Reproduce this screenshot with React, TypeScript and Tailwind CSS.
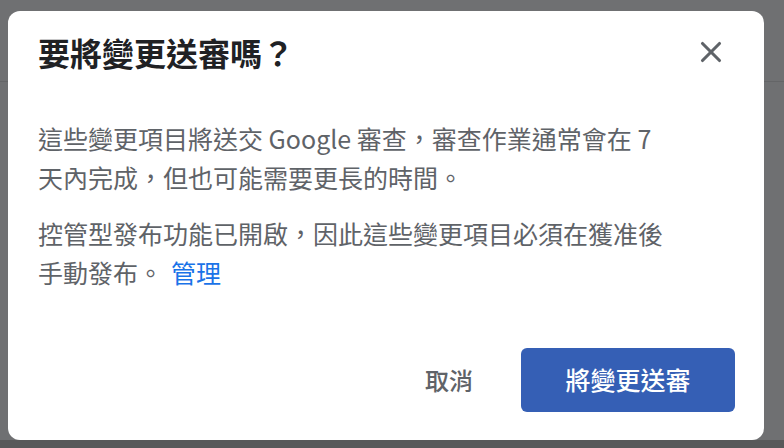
import { X } from "lucide-react";

const font = { fontFamily: '"Noto Sans CJK TC", "Noto Sans", sans-serif' };

export default function App() {
  return (
    <div className="relative h-[448px] w-[784px] overflow-hidden bg-[#6f7072]" style={font}>
      {/* page behind the scrim */}
      <div className="h-[82px] border-b border-[#646567]" />
      <div className="absolute inset-x-0 bottom-0 h-[8px] bg-[#58595a]" />

      {/* dialog */}
      <div className="absolute left-[8px] top-[11px] flex h-[429px] w-[756px] flex-col rounded-[12px] bg-white">
        <div className="flex items-center justify-between pl-[30px] pr-[36px] pt-[22px]">
          <h1 className="text-[32px] font-bold leading-[38px] text-[#202124]">要將變更送審嗎？</h1>
          <button className="text-[#5f6368]">
            <X size={34} strokeWidth={2.2} />
          </button>
        </div>

        <div className="mt-[48px] w-[660px] space-y-[17px] pl-[30px] text-[25px] leading-[39px] text-[#5f6368]">
          <p>這些變更項目將送交 Google 審查，審查作業通常會在 7 天內完成，但也可能需要更長的時間。</p>
          <p>
            <span>控管型發布功能已開啟，因此這些變更項目必須在獲准後手動發布。</span>
            <a className="ml-[8px] inline-block text-[#1a73e8]">管理</a>
          </p>
        </div>

        <div className="mt-auto flex items-center justify-end gap-[48px] pb-[28px] pr-[29px]">
          <button className="text-[24px] font-medium text-[#5f6368]">取消</button>
          <button className="h-[64px] w-[214px] rounded-[6px] bg-[#355fb5] text-[25px] font-medium text-white">
            將變更送審
          </button>
        </div>
      </div>
    </div>
  );
}
